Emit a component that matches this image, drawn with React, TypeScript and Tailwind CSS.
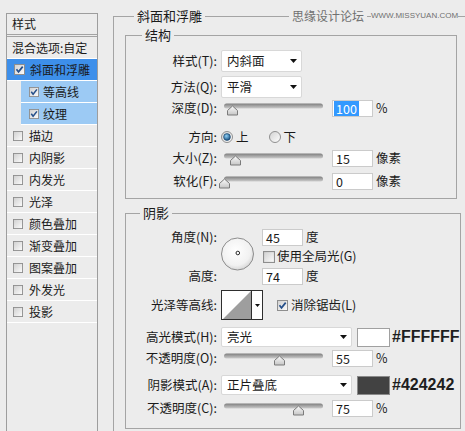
import React from 'react'

const EFFECTS = ['描边', '内阴影', '内发光', '光泽', '颜色叠加', '渐变叠加', '图案叠加', '外发光', '投影']

function Defs() {
  return (
    <svg width="0" height="0" className="absolute">
      <defs>
        <linearGradient id="trk" x1="0" y1="0" x2="0" y2="1">
          <stop offset="0" stopColor="#7e7e7e" />
          <stop offset="1" stopColor="#cdcdcd" />
        </linearGradient>
        <linearGradient id="thm" x1="0" y1="0" x2="0" y2="1">
          <stop offset="0" stopColor="#fbfbfb" />
          <stop offset="1" stopColor="#c6c6c6" />
        </linearGradient>
        <linearGradient id="cbx" x1="0" y1="0" x2="1" y2="1">
          <stop offset="0" stopColor="#cfcfcf" />
          <stop offset="1" stopColor="#fdfdfd" />
        </linearGradient>
        <linearGradient id="rbg" x1="0" y1="0" x2="1" y2="1">
          <stop offset="0" stopColor="#d2d2d2" />
          <stop offset="1" stopColor="#ffffff" />
        </linearGradient>
        <radialGradient id="rdo" cx="0.4" cy="0.35" r="0.7">
          <stop offset="0" stopColor="#8fd0f5" />
          <stop offset="1" stopColor="#124a7c" />
        </radialGradient>
        <radialGradient id="dial" cx="0.45" cy="0.4" r="0.65">
          <stop offset="0" stopColor="#ffffff" />
          <stop offset="0.7" stopColor="#f1f1f1" />
          <stop offset="1" stopColor="#cfcfcf" />
        </radialGradient>
      </defs>
    </svg>
  )
}

function CheckBox({ checked = false, size = 11, className = '' }: { checked?: boolean; size?: number; className?: string }) {
  return (
    <svg width={size} height={size} viewBox="0 0 11 11" className={`shrink-0 ${className}`}>
      <rect x="0.5" y="0.5" width="10" height="10" fill="url(#cbx)" stroke="#8e8e8e" />
      {checked && <path d="M2.5 5.3 4.5 7.9 8.7 2.6" fill="none" stroke="#254f8a" strokeWidth="1.7" />}
    </svg>
  )
}

function Radio({ checked = false, className = '' }: { checked?: boolean; className?: string }) {
  return (
    <svg width="12" height="12" viewBox="0 0 12 12" className={`shrink-0 ${className}`}>
      <circle cx="6" cy="6" r="5.5" fill="url(#rbg)" stroke="#8f8f8f" />
      {checked && <circle cx="6" cy="6" r="3.4" fill="url(#rdo)" stroke="#0f3b63" strokeWidth="0.6" />}
    </svg>
  )
}

function Arrow() {
  return (
    <svg width="7" height="4" className="shrink-0">
      <path d="M0 0H7L3.5 4Z" fill="#111" />
    </svg>
  )
}

function Select({ value, className }: { value: string; className: string }) {
  return (
    <div className={`ml-[4px] flex shrink-0 items-center justify-between rounded-[2px] border border-[#d8d8d8] bg-white pl-[5px] pr-[4px] ${className}`}>
      <span className="leading-[16px]">{value}</span>
      <Arrow />
    </div>
  )
}

function Slider({ at }: { at: number }) {
  const x = at + 0.5
  return (
    <svg width="108" height="18" className="ml-[2px] shrink-0">
      <rect x="5" y="4.5" width="99" height="5" rx="2.5" fill="url(#trk)" />
      <path d={`M${x} 7L${x + 5} 11.5V16H${x - 5}V11.5Z`} fill="url(#thm)" stroke="#7b7b7b" strokeLinejoin="round" />
    </svg>
  )
}

function Field({ value, selected = false, className = 'ml-[5px]' }: { value: string; selected?: boolean; className?: string }) {
  return (
    <div className={`flex h-[17px] w-[41px] shrink-0 items-center border border-[#cbcbcb] bg-white ${selected ? 'pl-[1px]' : 'pl-[3px]'} ${className}`}>
      {selected ? (
        <span className="bg-[#3399ff] px-[2px] leading-[15px] text-white">{value}</span>
      ) : (
        <span className="leading-[15px]">{value}</span>
      )}
    </div>
  )
}

function Row({ label, className, children }: { label: string; className: string; children: React.ReactNode }) {
  return (
    <div className={`flex items-center ${className}`}>
      <div className="w-[91px] shrink-0 whitespace-nowrap text-right leading-[16px]">{label}</div>
      {children}
    </div>
  )
}

function Hex({ children }: { children: string }) {
  return (
    <span className="ml-[2px] whitespace-nowrap font-['Liberation_Sans',Arial,sans-serif] text-[16px] font-bold leading-[18px] text-[#1e1e1e]">
      {children}
    </span>
  )
}

function StyleList() {
  return (
    <div className="ml-[6px] mt-[13px] flex w-[92px] shrink-0 flex-col border border-b-0 border-[#9d9d9d] text-[12px]">
      <div className="flex h-[20px] items-center pl-[5px] leading-[16px]">样式</div>
      <div className="border-b-[3px] border-double border-[#a3a3a3]" />
      <div className="flex h-[22px] items-center border-b border-white pl-[5px] leading-[16px]">混合选项:自定</div>
      <div className="flex h-[22px] items-center border-b border-white bg-[#3d8fea] pl-[7px]">
        <CheckBox checked />
        <span className="ml-[5px] leading-[16px]">斜面和浮雕</span>
      </div>
      {['等高线', '纹理'].map((t) => (
        <div key={t} className="ml-[14px] flex h-[22px] items-center border-b border-white bg-[#9ccaf4] pl-[8px]">
          <CheckBox checked size={10} />
          <span className="ml-[4px] leading-[16px]">{t}</span>
        </div>
      ))}
      {EFFECTS.map((t) => (
        <div key={t} className="flex h-[22px] items-center border-b border-white pl-[6px]">
          <CheckBox size={10} />
          <span className="ml-[6px] leading-[16px]">{t}</span>
        </div>
      ))}
    </div>
  )
}

function Structure() {
  return (
    <fieldset className="ml-[11px] mt-[3px] w-[332px] border border-[#a4a4a4] pb-[7px]">
      <legend className="ml-[16px] px-[3px] text-[13px] leading-[16px]">结构</legend>
      <Row label="样式(T):" className="mt-[7px] h-[22px]">
        <Select value="内斜面" className="h-[22px] w-[81px]" />
      </Row>
      <Row label="方法(Q):" className="mt-[4px] h-[22px]">
        <Select value="平滑" className="h-[22px] w-[81px]" />
      </Row>
      <Row label="深度(D):" className="h-[20px]">
        <Slider at={13} />
        <Field value="100" selected />
        <span className="ml-[3px]">%</span>
      </Row>
      <Row label="方向:" className="mt-[9px] h-[20px]">
        <Radio checked className="ml-[4px]" />
        <span className="ml-[3px]">上</span>
        <Radio className="ml-[20px]" />
        <span className="ml-[3px]">下</span>
      </Row>
      <Row label="大小(Z):" className="mt-[1px] h-[20px]">
        <Slider at={16} />
        <Field value="15" />
        <span className="ml-[3px]">像素</span>
      </Row>
      <Row label="软化(F):" className="mt-[3px] h-[20px]">
        <Slider at={5} />
        <Field value="0" />
        <span className="ml-[3px]">像素</span>
      </Row>
    </fieldset>
  )
}

function Shading() {
  return (
    <fieldset className="ml-[11px] mt-[6px] w-[336px] border border-[#a4a4a4] pb-[11px]">
      <legend className="ml-[14px] px-[3px] text-[13px] leading-[16px]">阴影</legend>

      {/* angle + altitude */}
      <div className="mt-[7px] flex h-[57px]">
        <div className="flex w-[91px] shrink-0 flex-col justify-between">
          <div className="flex h-[18px] items-center justify-end">角度(N):</div>
          <div className="flex h-[18px] items-center justify-end">高度:</div>
        </div>
        <svg width="36" height="57" className="ml-[4px] shrink-0">
          <circle cx="16.5" cy="26" r="16" fill="url(#dial)" stroke="#8c8c8c" />
          <circle cx="16.8" cy="25" r="1.8" fill="#fff" stroke="#2a2a2a" />
        </svg>
        <div className="ml-[5px] flex flex-col">
          <div className="flex h-[18px] items-center">
            <Field value="45" className="" />
            <span className="ml-[3px]">度</span>
          </div>
          <div className="flex h-[21px] items-center">
            <CheckBox size={12} className="ml-[1px]" />
            <span className="ml-[2px] whitespace-nowrap">使用全局光(G)</span>
          </div>
          <div className="flex h-[18px] items-center">
            <Field value="74" className="" />
            <span className="ml-[3px]">度</span>
          </div>
        </div>
      </div>

      <Row label="光泽等高线:" className="mt-[5px] h-[30px]">
        <div className="ml-[4px] flex h-[30px] w-[42px] shrink-0 border border-[#2e2e2e] bg-white">
          <svg width="29" height="28" className="block shrink-0">
            <path d="M1 28H29V0Z" fill="#9e9e9e" />
          </svg>
          <div className="flex flex-1 items-center justify-center border-l border-[#2e2e2e]">
            <svg width="5" height="3">
              <path d="M0 0H5L2.5 3Z" fill="#111" />
            </svg>
          </div>
        </div>
        <CheckBox checked className="ml-[14px]" />
        <span className="ml-[3px] whitespace-nowrap">消除锯齿(L)</span>
      </Row>

      <Row label="高光模式(H):" className="mt-[7px] h-[20px]">
        <Select value="亮光" className="h-[20px] w-[131px]" />
        <div className="ml-[5px] h-[19px] w-[33px] shrink-0 border border-[#a0a0a0] bg-white" />
        <Hex>#FFFFFF</Hex>
      </Row>
      <Row label="不透明度(O):" className="mt-[2px] h-[18px]">
        <Slider at={60} />
        <Field value="55" />
        <span className="ml-[3px]">%</span>
      </Row>
      <Row label="阴影模式(A):" className="mt-[8px] h-[20px]">
        <Select value="正片叠底" className="h-[20px] w-[131px]" />
        <div className="ml-[5px] h-[19px] w-[33px] shrink-0 border border-[#8a8a8a] bg-[#424242]" />
        <Hex>#424242</Hex>
      </Row>
      <Row label="不透明度(C):" className="mt-[4px] h-[18px]">
        <Slider at={79} />
        <Field value="75" />
        <span className="ml-[3px]">%</span>
      </Row>
    </fieldset>
  )
}

export default function App() {
  return (
    <div className="relative flex h-[431px] w-[465px] overflow-hidden bg-[#ececec] font-['Noto_Sans_CJK_SC','Noto_Sans',sans-serif] text-[12.5px] text-[#1a1a1a]">
      <Defs />
      <StyleList />
      <fieldset className="ml-[15px] mt-[8px] h-[440px] w-[400px] shrink-0 border border-[#a4a4a4]">
        <legend className="ml-[20px] px-[3px] text-[13px] leading-[16px]">斜面和浮雕</legend>
        <Structure />
        <Shading />
      </fieldset>

      {/* watermark */}
      <div className="absolute left-[289px] top-[8px] flex h-[16px] w-[172px] items-center whitespace-nowrap">
        <span className="shrink-0 bg-[#ececec] px-[3px] text-[12px] leading-[16px] text-[#707070]">思缘设计论坛</span>
        <span className="ml-[4px] shrink-0 bg-[#ececec] font-['Liberation_Sans',Arial,sans-serif] text-[8px] leading-[10px] text-[#707070]">
          WWW.MISSYUAN.COM
        </span>
      </div>
    </div>
  )
}
